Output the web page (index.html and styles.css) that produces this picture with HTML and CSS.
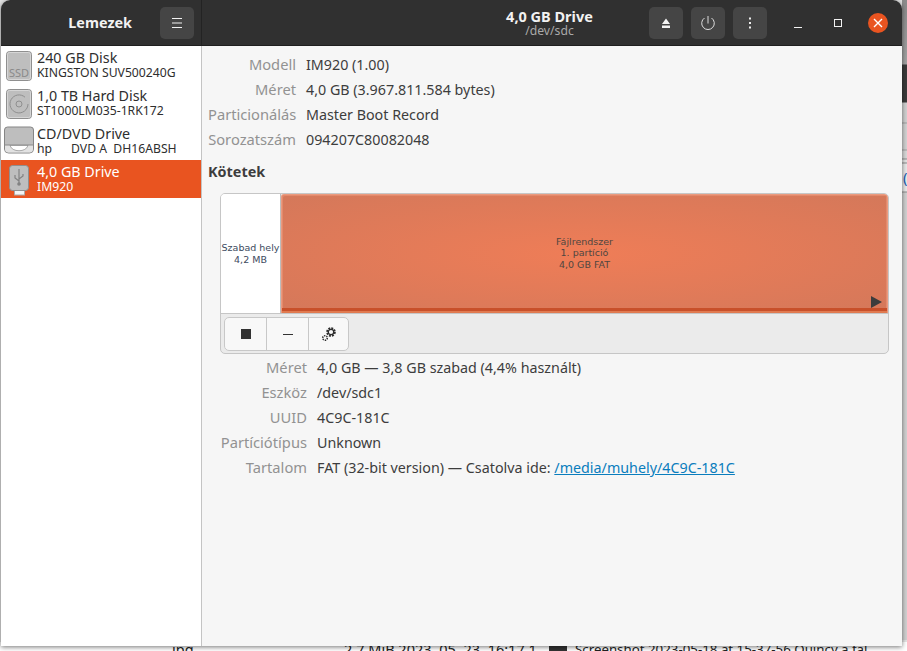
FILE: index.html
```html
<!DOCTYPE html>
<html lang="hu">
<head>
<meta charset="utf-8">
<title>Lemezek</title>
<link rel="stylesheet" href="styles.css">
</head>
<body>
<div class="strip"><span class="strip-char">(</span></div>
<div class="behind">
  <span class="b-jpg">jpg</span>
  <span class="b-meta">2,7 MiB 2023. 05. 23. 16:17 1</span>
  <span class="b-thumb"></span>
  <span class="b-name">Screenshot 2023-05-18 at 15-37-56 Quincy a fal...</span>
</div>
<div class="window">
  <header class="titlebar">
    <div class="tb-left">
      <span class="tb-appname">Lemezek</span>
      <button class="tb-btn tb-menu"><svg width="16" height="16" viewBox="0 0 16 16"><path d="M3 3.500h10M3 8h10M3 12.500h10" stroke="#f2f2f2" stroke-width="1" fill="none"/></svg></button>
    </div>
    <div class="tb-right">
      <div class="tb-title"><div class="tb-t1">4,0 GB Drive</div><div class="tb-t2">/dev/sdc</div></div>
      <div class="tb-actions">
        <button class="tb-btn"><svg width="16" height="16" viewBox="0 0 16 16"><path d="M8 3.500l4 5.500h-8zM4 10.500h8V13H4z" fill="#f4f4f4"/></svg></button>
        <button class="tb-btn"><svg width="16" height="16" viewBox="0 0 16 16"><path d="M8 1v7.500M4.500 3a6.300 6.300 0 1 0 7 0" stroke="#ddd" stroke-width="1" fill="none"/></svg></button>
        <button class="tb-btn"><svg width="16" height="16" viewBox="0 0 16 16"><path d="M7 2.500h2v2H7zM7 7h2v2H7zM7 11.500h2v2H7z" fill="#eee"/></svg></button>
      </div>
      <div class="wm">
        <svg width="16" height="16" viewBox="0 0 16 16"><path d="M4 12.500h8" stroke="#f2f2f2" stroke-width="1"/></svg>
        <svg width="16" height="16" viewBox="0 0 16 16"><rect x="4.500" y="4.500" width="7" height="7" stroke="#f2f2f2" fill="none"/></svg>
        <span class="wm-close"><svg width="12" height="12" viewBox="0 0 12 12"><path d="M2 2l8 8M10 2l-8 8" stroke="#fff" stroke-width="1.400"/></svg></span>
      </div>
    </div>
  </header>
  <div class="content">
    <aside class="sidebar">
      <div class="disk">
        <svg class="dicon" width="32" height="34" viewBox="0 0 32 34"><rect x="3.500" y="3.500" width="25" height="29" rx="3" fill="#bebebe" stroke="#8f8f8f"/><rect x="4.500" y="4.500" width="23" height="27" rx="2" fill="none" stroke="#d6d6d6"/><text x="16" y="29" class="ssd">SSD</text></svg>
        <div><div class="d1">240 GB Disk</div><div class="d2">KINGSTON SUV500240G</div></div>
      </div>
      <div class="disk">
        <svg class="dicon" width="32" height="34" viewBox="0 0 32 34"><rect x="3.500" y="3.500" width="25" height="29" rx="3" fill="#bebebe" stroke="#8f8f8f"/><rect x="4.500" y="4.500" width="23" height="27" rx="2" fill="none" stroke="#d6d6d6"/><path d="M22 11.200A9 9 0 1 0 25 18" fill="none" stroke="#8f8f8f"/><circle cx="16" cy="18" r="3" fill="none" stroke="#8f8f8f"/></svg>
        <div><div class="d1">1,0 TB Hard Disk</div><div class="d2">ST1000LM035-1RK172</div></div>
      </div>
      <div class="disk">
        <svg class="dicon" width="32" height="34" viewBox="0 0 32 34"><path d="M1.500 6a3 3 0 0 1 3-3h23a3 3 0 0 1 3 3v19a4 4 0 0 1-4 4h-21a4 4 0 0 1-4-4z" fill="#bebebe" stroke="#858585"/><path d="M2 21h28v4a3.500 3.500 0 0 1-3.500 3.500h-21A3.500 3.500 0 0 1 2 25z" fill="#e2e2e2"/><path d="M1.500 21h29" stroke="#8a8a8a"/><path d="M7 21.500h18c-2 7-16 7-18 0z" fill="#fff" stroke="#777" stroke-width=".6"/></svg>
        <div><div class="d1">CD/DVD Drive</div><div class="d2 pre">hp      DVD A  DH16ABSH</div></div>
      </div>
      <div class="disk sel">
        <svg class="dicon" width="32" height="34" viewBox="0 0 32 34"><rect x="11.500" y="28" width="10" height="5" fill="#f4f4f4" stroke="#aaa"/><rect x="6.500" y="3.500" width="19" height="25" rx="3" fill="#bebebe" stroke="#8f8f8f"/><path d="M16 7v15M16 19l-4-3v-3M16 17l4-3v-2" stroke="#828282" stroke-width="1.200" fill="none"/><circle cx="16" cy="22" r="1.800" fill="#828282"/></svg>
        <div><div class="d1">4,0 GB Drive</div><div class="d2">IM920</div></div>
      </div>
    </aside>
    <main class="main">
      <dl class="props top">
        <dt>Modell</dt><dd>IM920 (1.00)</dd>
        <dt>Méret</dt><dd>4,0 GB (3.967.811.584 bytes)</dd>
        <dt>Particionálás</dt><dd>Master Boot Record</dd>
        <dt>Sorozatszám</dt><dd>094207C80082048</dd>
      </dl>
      <h2 class="heading">Kötetek</h2>
      <section class="volumes">
        <div class="bar">
          <div class="free"><div>Szabad hely</div><div>4,2 MB</div></div>
          <div class="part"><div>Fájlrendszer</div><div>1. partíció</div><div>4,0 GB FAT</div><span class="play"></span></div>
        </div>
        <div class="toolbar">
          <div class="tools">
            <button class="tool"><span class="stop"></span></button>
            <button class="tool"><span class="minus"></span></button>
            <button class="tool"><svg width="16" height="16" viewBox="0 0 16 16"><g fill="none" stroke="#2e2e2e"><circle cx="10" cy="6" r="3.600" stroke-width="2.400" stroke-dasharray="1.800 1"/><circle cx="10" cy="6" r="2.700" stroke-width="1.200"/><circle cx="4" cy="12" r="2.300" stroke-width="1.500" stroke-dasharray="1.300 .9"/></g></svg></button>
          </div>
        </div>
      </section>
      <dl class="props vol">
        <dt>Méret</dt><dd>4,0 GB — 3,8 GB szabad (4,4% használt)</dd>
        <dt>Eszköz</dt><dd>/dev/sdc1</dd>
        <dt>UUID</dt><dd>4C9C-181C</dd>
        <dt>Partíciótípus</dt><dd>Unknown</dd>
        <dt>Tartalom</dt><dd>FAT (32-bit version) — Csatolva ide: <a href="#">/media/muhely/4C9C-181C</a></dd>
      </dl>
    </main>
  </div>
</div>
</body>
</html>
```
FILE: styles.css
```css
* { box-sizing: border-box; }
html, body { margin: 0; height: 100%; }
body { background: #e4e4e4; overflow: hidden; position: relative; font-family: "Noto Sans", "Open Sans", sans-serif; }
.strip { position: absolute; left: 902px; right: 0; top: 0; height: 640px; overflow: hidden; background: linear-gradient(#8a8a8a 0, #a2a2a2 64px, #3a3a3a 65px 102px, #d0d0d0 103px 122px, #a0a0a0 123px, #d2d2d2 124px 149px, #a0a0a0 150px, #d8d8d8 151px 158px, #8c8c8c 159px, #e4e4e4 160px 162px, #8c8c8c 163px, #e8e8e8 164px 191px, #8c8c8c 192px, #d0d0d0 193px); }
.strip-char { position: absolute; left: 1px; top: 167px; font-size: 15px; line-height: 20px; color: #1a5fb4; }
.behind { position: absolute; left: 0; right: 0; bottom: -6px; height: 15px; font: 14.500px/15px "Noto Sans", sans-serif; color: #222; background: #fff; }
.behind span { position: absolute; top: 0; white-space: nowrap; }
.b-jpg { left: 172px; }
.b-meta { left: 344px; }
.b-thumb { left: 549px; width: 18px; height: 15px; background: #333; }
.behind .b-name { left: 575px; font-size: 13.300px; }
.window { position: absolute; left: 1px; top: 0; width: 901px; height: 646px; display: flex; flex-direction: column; background: #f6f6f6; border-radius: 9px 9px 0 0; overflow: hidden; box-shadow: 0 1px 5px rgba(0,0,0,.55); }
.titlebar { height: 46px; flex: none; display: flex; background: #303030; color: #f2f2f2; border-bottom: 1px solid #1f1f1f; }
.tb-left { width: 201px; flex: none; display: flex; align-items: center; justify-content: flex-end; padding-right: 7px; border-right: 1px solid #232323; }
.tb-appname { font-weight: 700; font-size: 14.400px; margin-right: 28px; }
.tb-btn { width: 34px; height: 32px; border: 0; padding: 0; border-radius: 5px; background: #454545; display: flex; align-items: center; justify-content: center; }
.tb-right { flex: 1; display: flex; align-items: center; position: relative; justify-content: flex-end; }
.tb-title { position: absolute; left: 240px; width: 215px; text-align: center; }
.tb-t1 { font-size: 14.500px; font-weight: 700; line-height: 16px; }
.tb-t2 { font-size: 12.200px; line-height: 14px; color: #aaa; }
.tb-actions { display: flex; gap: 8px; margin-right: 23px; }
.wm { display: flex; align-items: center; gap: 24px; margin-right: 14px; }
.wm-close { width: 20px; height: 20px; margin-left: -2px; border-radius: 50%; background: #e95420; display: flex; align-items: center; justify-content: center; }
.content { flex: 1; display: flex; min-height: 0; }
.sidebar { width: 201px; flex: none; background: #fff; border-right: 1px solid #c4c4c4; }
.disk { height: 38px; display: flex; align-items: center; gap: 2px; padding-left: 2px; color: #2e2e2e; }
.disk .dicon { flex: none; }
.d1 { font-size: 14.300px; line-height: 16px; }
.d2 { font-size: 12.200px; line-height: 14px; }
.pre { white-space: pre; }
.sel { background: #e95420; color: #fff; }
.ssd { font: 11px "Noto Sans", sans-serif; fill: #8a8a8a; text-anchor: middle; }
.main { flex: 1; min-width: 0; padding: 0 13px 0 6px; }
.props { display: grid; margin: 0; font-size: 14.300px; line-height: 25px; }
.props dt { color: #929292; text-align: right; font-size: 14.700px; }
.props dd { margin: 0; color: #3d3d3d; white-space: nowrap; }
.top { grid-template-columns: 88px 1fr; column-gap: 10px; padding-top: 6px; }
.heading { margin: 10px 0 11px; font-size: 14.400px; line-height: 20px; font-weight: 700; color: #3d3d3d; }
.volumes { margin-left: 12px; border: 1px solid #c6c6c6; border-radius: 5px; background: #ebebeb; overflow: hidden; }
.bar { height: 120px; display: flex; border-bottom: 1px solid #c6c6c6; font: 9.500px/11.500px "DejaVu Sans", sans-serif; text-align: center; }
.free { width: 60px; background: #fff; color: #3d4a5e; display: flex; flex-direction: column; justify-content: center; border-right: 1px solid #bdbdbd; white-space: nowrap; }
.part { flex: 1; position: relative; display: flex; flex-direction: column; justify-content: center; padding-bottom: 2px; color: #504640; background: radial-gradient(ellipse at center, #ef7d57, #d4785a); border: 1px solid #eb9a7e; border-bottom: 0; border-radius: 3px 3px 0 0; box-shadow: inset 0 -2px 0 #e07a50, inset 0 -5px 0 #c8502a, inset 1px 1px 0 #e38a6c, inset -1px 0 0 #e38a6c; }
.play { position: absolute; right: 5px; bottom: 5px; width: 0; height: 0; border-left: 11px solid #3c3c3c; border-top: 6px solid transparent; border-bottom: 6px solid transparent; }
.toolbar { height: 39px; padding: 3px; }
.tools { display: inline-flex; border: 1px solid #c8c8c8; border-radius: 5px; background: #f8f8f8; }
.tool { width: 42px; height: 32px; border: 0; border-right: 1px solid #c8c8c8; background: none; padding: 0; display: flex; align-items: center; justify-content: center; }
.tool:last-child { width: 39px; border-right: 0; }
.stop { width: 10px; height: 10px; background: #333; }
.minus { width: 10px; height: 1px; background: #333; }
.vol { grid-template-columns: 99px 1fr; column-gap: 10px; padding-top: 1px; }
.vol a { color: #0a7dbd; }
```
